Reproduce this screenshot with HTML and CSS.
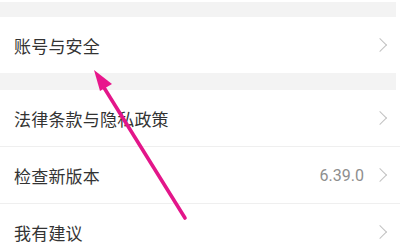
FILE: index.html
```html
<!DOCTYPE html>
<html lang="zh">
<head>
<meta charset="utf-8">
<link rel="stylesheet" href="styles.css">
</head>
<body>
<div class="page">
  <div class="gap"></div>
  <div class="row"><span class="label">账号与安全</span><span class="chev"></span></div>
  <div class="gap"></div>
  <div class="row line"><span class="label">法律条款与隐私政策</span><span class="chev"></span></div>
  <div class="row line"><span class="label">检查新版本</span><span class="value">6.39.0</span><span class="chev"></span></div>
  <div class="row"><span class="label">我有建议</span><span class="chev"></span></div>
  <svg class="arrow" width="400" height="242" viewBox="0 0 400 242">
    <defs>
      <filter id="blur" x="-20%" y="-20%" width="140%" height="140%"><feGaussianBlur stdDeviation="0.6"/></filter>
    </defs>
    <g filter="url(#blur)">
      <line x1="185" y1="218" x2="103" y2="86" stroke="#e3198a" stroke-width="3.6" stroke-linecap="round"/>
      <polygon points="94,70 100,91 112,84" fill="#e8188c"/>
    </g>
  </svg>
</div>
</body>
</html>
```
FILE: styles.css
```css
html, body {
  margin: 0;
  padding: 0;
  background: #ffffff;
}
.page {
  position: relative;
  width: 400px;
  height: 242px;
  overflow: hidden;
  padding-top: 2px;
  box-sizing: border-box;
  font-family: "Noto Sans CJK SC", "Noto Sans", sans-serif;
}
.gap {
  height: 15px;
  background: #f3f3f3;
  margin-right: 4px;
}
.gap + .row + .gap {
  height: 17px;
}
.row {
  height: 56px;
  display: flex;
  align-items: center;
  padding: 0 13px 0 14px;
  background: #fff;
}
.row.line {
  border-bottom: 1px solid #efefef;
}
.label {
  flex: 1;
  font-size: 17px;
  color: #333333;
  letter-spacing: 0.2px;
}
.value {
  font-family: Roboto, "Noto Sans", sans-serif;
  font-size: 16px;
  color: #8e8e8e;
  margin-right: 11px;
}
.chev {
  width: 9px;
  height: 9px;
  border-top: 1.2px solid #c2c2c2;
  border-right: 1.2px solid #c2c2c2;
  transform: rotate(45deg);
  margin-right: 2px;
}
.arrow {
  position: absolute;
  left: 0;
  top: 0;
}
```
